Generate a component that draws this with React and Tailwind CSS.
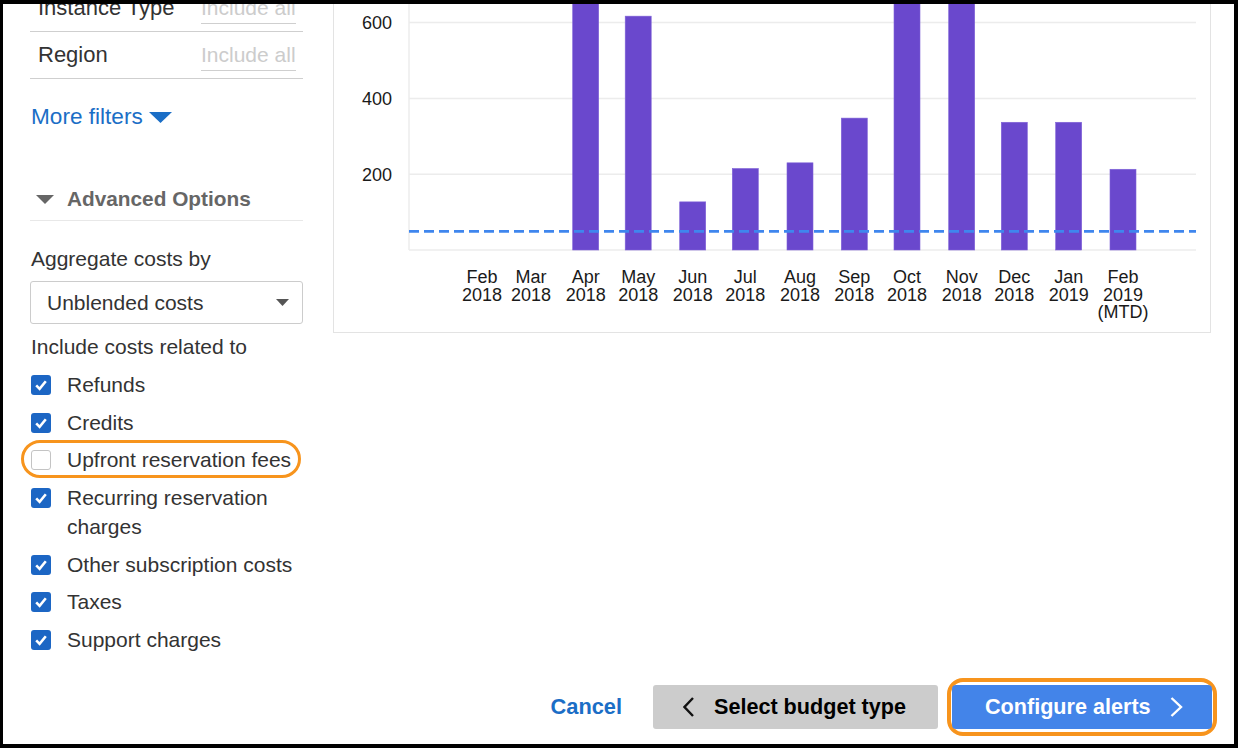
import React from 'react';

const months = [
  { label: 'Feb', year: '2018', x: 482, value: 0 },
  { label: 'Mar', year: '2018', x: 531, value: 0 },
  { label: 'Apr', year: '2018', x: 585.7, value: 720 },
  { label: 'May', year: '2018', x: 638.2, value: 617 },
  { label: 'Jun', year: '2018', x: 692.7, value: 127 },
  { label: 'Jul', year: '2018', x: 745.3, value: 215 },
  { label: 'Aug', year: '2018', x: 800, value: 230 },
  { label: 'Sep', year: '2018', x: 854.3, value: 348 },
  { label: 'Oct', year: '2018', x: 907, value: 720 },
  { label: 'Nov', year: '2018', x: 961.7, value: 720 },
  { label: 'Dec', year: '2018', x: 1014.3, value: 337 },
  { label: 'Jan', year: '2019', x: 1068.7, value: 337 },
  { label: 'Feb', year: '2019', x: 1123, value: 213, extra: '(MTD)' },
];

const scaleY = (v) => 250 - v * 0.379;

const filters = [
  { name: 'Instance Type' },
  { name: 'Region' },
];

const costOptions = [
  { label: 'Refunds', checked: true },
  { label: 'Credits', checked: true },
  { label: 'Upfront reservation fees', checked: false, highlight: true },
  { label: 'Recurring reservation charges', checked: true, wrap: true },
  { label: 'Other subscription costs', checked: true },
  { label: 'Taxes', checked: true },
  { label: 'Support charges', checked: true },
];

const Checkbox = ({ checked }) =>
  checked ? (
    <div className="mt-[5px] flex h-[20px] w-[20px] shrink-0 items-center justify-center rounded-[3px] bg-[#1c66c4]">
      <svg width="14" height="14" viewBox="0 0 14 14">
        <path d="M2.2 7.4 L5.6 10.8 L11.8 3.2" fill="none" stroke="#fff" strokeWidth="2.6" />
      </svg>
    </div>
  ) : (
    <div className="mt-[5px] h-[20px] w-[20px] shrink-0 rounded-[3px] border border-[#c4c4c4] bg-white" />
  );

const CostChart = () => (
  <svg width="876" height="328" viewBox="334 4 876 328" fontFamily="'Liberation Sans', Arial, sans-serif">
    {/* grid */}
    <line x1="409" y1="0" x2="409" y2="250" stroke="#ececec" strokeWidth="1.5" />
    {[600, 400, 200, 0].map((v) => (
      <line key={v} x1="409" y1={scaleY(v)} x2="1196" y2={scaleY(v)} stroke="#ececec" strokeWidth="1.5" />
    ))}
    {[600, 400, 200].map((v) => (
      <text key={v} x="392" y={scaleY(v) + 6.5} textAnchor="end" fontSize="18" fill="#1a1a1a">
        {v}
      </text>
    ))}

    {/* bars */}
    {months.map((m, i) =>
      m.value > 0 ? (
        <rect
          key={i}
          x={m.x - 13}
          y={scaleY(m.value)}
          width="26"
          height={250 - scaleY(m.value)}
          fill="#6a48cd"
          stroke="#7f62d8"
          strokeWidth="0.6"
        />
      ) : null
    )}

    {/* budget line */}
    <line x1="409" y1="231.3" x2="1196" y2="231.3" stroke="#3f86ee" strokeWidth="2.8" strokeDasharray="10 5" />

    {/* x labels */}
    {months.map((m, i) => (
      <text key={i} x={m.x} textAnchor="middle" fontSize="18" fill="#1a1a1a">
        <tspan x={m.x} y="283">{m.label}</tspan>
        <tspan x={m.x} y="300.5">{m.year}</tspan>
        {m.extra && <tspan x={m.x} y="318">{m.extra}</tspan>}
      </text>
    ))}
  </svg>
);

const App = () => {
  return (
    <div className="flex h-[748px] w-[1238px] overflow-hidden border-t-4 border-r-4 border-b-4 border-l-[3px] border-black bg-white font-['Liberation_Sans',Arial,sans-serif] text-[#333]">
      {/* Sidebar */}
      <div className="ml-[27px] mt-[-19px] w-[273px] shrink-0">
        {filters.map((f) => (
          <div key={f.name} className="flex h-[47px] items-end justify-between border-b border-[#cfcfcf] pb-[7px] pl-2 pr-[7px]">
            <span className="h-[32px] text-[22px] leading-[31px] text-[#333]">{f.name}</span>
            <div className="h-[32px] w-[95px] border-b border-[#cfcfcf] text-[21px] leading-[31px] text-[#cccccc]">
              Include all
            </div>
          </div>
        ))}

        <div className="mt-[25px] flex h-[26px] items-center pl-[1px] text-[22.6px] leading-[26px] text-[#1b6ec6]">
          <span>More filters</span>
          <svg className="ml-[6px]" width="23" height="11" viewBox="0 0 23 11">
            <path d="M0 0 H23 L11.5 11 Z" fill="#1b6ec6" />
          </svg>
        </div>

        <div className="mt-[57px] flex items-center border-b border-[#e8e8e8] pb-[9px] pl-[6px]">
          <svg width="18" height="9" viewBox="0 0 18 9">
            <path d="M0 0 H18 L9 9 Z" fill="#666" />
          </svg>
          <span className="ml-[13px] text-[20.8px] font-bold leading-[24px] text-[#666]">Advanced Options</span>
        </div>

        <div className="mt-[26px] pl-[1px] text-[21px] leading-[24px]">Aggregate costs by</div>
        <div className="mt-[10px] flex h-[43px] items-center justify-between rounded-[3px] border border-[#cccccc] pl-[16px] pr-[13px] text-[21px]">
          <span>Unblended costs</span>
          <svg width="13" height="7" viewBox="0 0 13 7">
            <path d="M0 0 H13 L6.5 7 Z" fill="#555" />
          </svg>
        </div>

        <div className="mt-[11px] pl-[1px] text-[21px] leading-[24px]">Include costs related to</div>

        <div className="mt-[11px] flex flex-col gap-[8.5px] pl-[1px]">
          {costOptions.map((o) => (
            <div key={o.label} className={`relative flex items-start ${o.wrap ? 'mt-[0.5px]' : ''}`}>
              {o.highlight && (
                <div className="absolute top-[-5px] left-[-10px] h-[38px] w-[280px] rounded-[20px] border-[3px] border-[#f7941d]" />
              )}
              <Checkbox checked={o.checked} />
              <span className={`ml-[16px] text-[21px] leading-[29px] text-[#333] ${o.wrap ? 'w-[220px]' : ''}`}>
                {o.label}
              </span>
            </div>
          ))}
        </div>
      </div>

      {/* Main column */}
      <div className="ml-[30px] flex w-[879px] shrink-0 flex-col">
        <div className="h-[329px] w-[878px] border-x border-b border-[#e3e3e3]">
          <CostChart />
        </div>

        <div className="mt-auto mb-[15px] flex items-center justify-end">
          <button className="mr-[31px] text-[21.8px] font-bold text-[#1b6ec6]">Cancel</button>
          <button className="flex h-[44px] w-[285px] items-center rounded-[3px] bg-[#cccccc] pl-[30px] text-[21.6px] font-bold text-black">
            <svg width="11" height="20" viewBox="0 0 11 20">
              <path d="M10 1 L1.5 10 L10 19" fill="none" stroke="#111" strokeWidth="2.4" />
            </svg>
            <span className="ml-[20px]">Select budget type</span>
          </button>
          <div className="relative ml-[14px]">
            <div className="absolute -inset-x-[5px] -inset-y-[7px] rounded-[16px] border-4 border-[#f7941d]" />
            <button className="relative flex h-[44px] w-[260px] items-center rounded-[4px] bg-[#4384e9] pl-[33px] text-[21.6px] font-bold text-white">
              <span>Configure alerts</span>
              <svg className="ml-[19px]" width="13" height="20" viewBox="0 0 13 20">
                <path d="M1.5 1 L11 10 L1.5 19" fill="none" stroke="#fff" strokeWidth="2.4" />
              </svg>
            </button>
          </div>
        </div>
      </div>
    </div>
  );
};

export default App;
